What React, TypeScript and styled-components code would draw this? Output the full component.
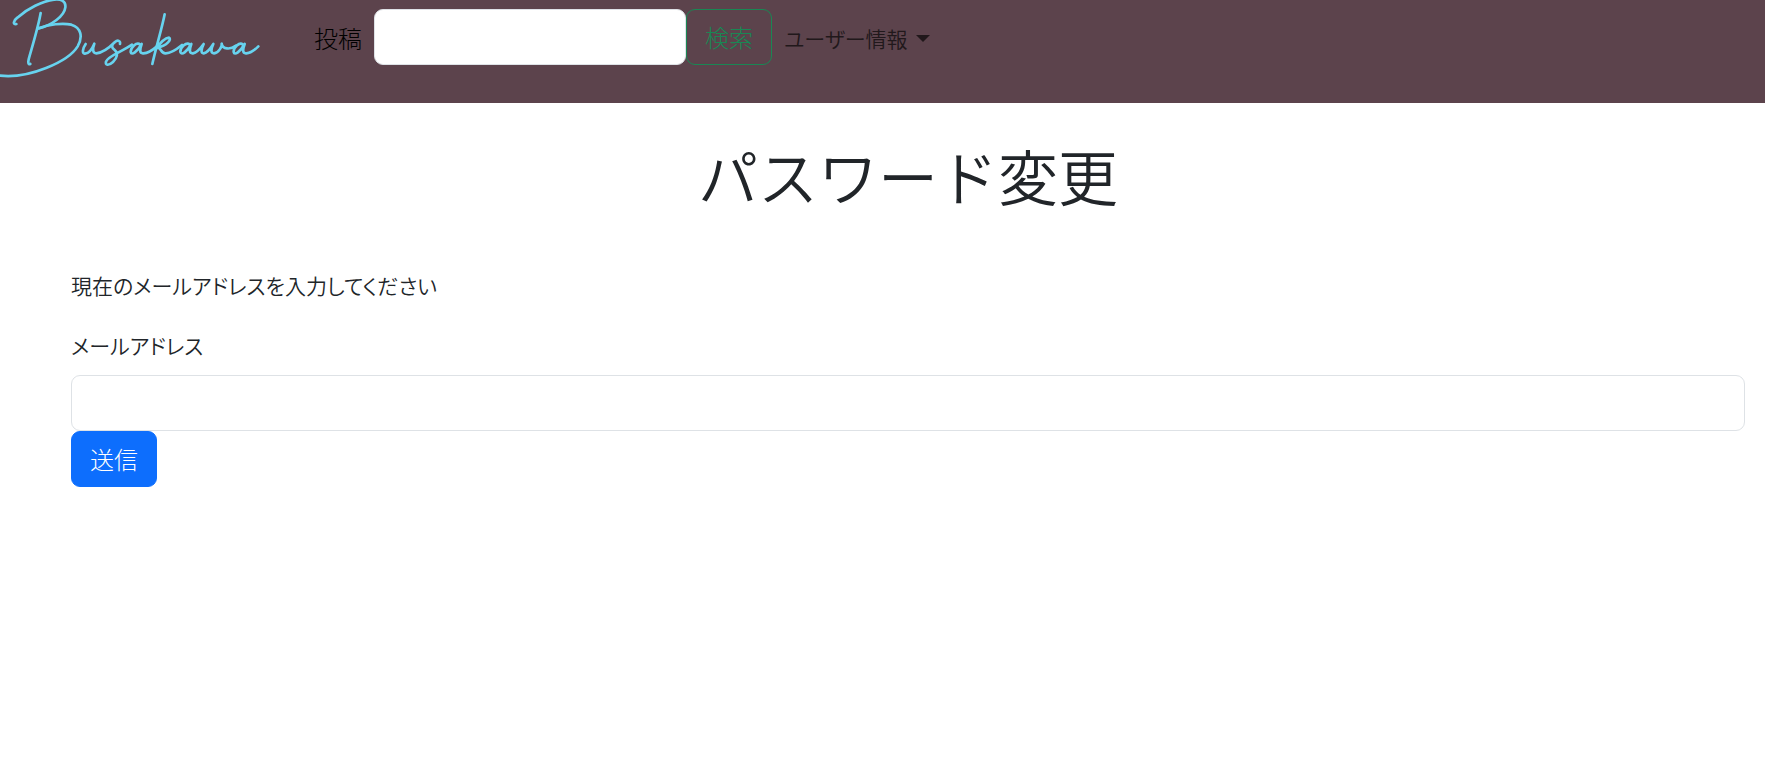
import React from "react";
import styled, { createGlobalStyle } from "styled-components";

const GlobalStyle = createGlobalStyle`
  *, *::before, *::after { box-sizing: border-box; }
  body {
    margin: 0;
    background: #fff;
    color: #212529;
    font-family: "Noto Sans CJK JP", sans-serif;
    font-size: 24px;
    font-weight: 300;
    line-height: 36px;
    font-feature-settings: "palt";
  }
`;

const Header = styled.header`
  display: flex;
  align-items: flex-start;
  min-height: 103px;
  background: #5c434c;
`;

const Brand = styled.a`
  display: block;
  flex: none;
  margin-right: 22px;
`;

const Logo = styled.svg`
  display: block;
  width: 280px;
  height: 80px;
  fill: none;
  stroke: #67d3ef;
  stroke-width: 8;
  stroke-linecap: round;
  stroke-linejoin: round;
`;

const Nav = styled.nav`
  display: flex;
  align-items: center;
  gap: 12px;
  padding: 9px 12px;
`;

const PostLink = styled.a`
  padding-top: 2px;
  color: #000;
  text-decoration: none;
`;

const SearchForm = styled.form`
  display: flex;
`;

const TextInput = styled.input`
  width: 100%;
  height: 56px;
  padding: 9px 18px;
  border: 1px solid #dee2e6;
  border-radius: 9px;
  background: #fff;
  color: inherit;
  font: inherit;
`;

const SearchInput = styled(TextInput)`
  width: 312px;
`;

const Button = styled.button`
  height: 56px;
  padding: 9px 18px;
  border: 1px solid #0d6efd;
  border-radius: 9px;
  background: #0d6efd;
  color: #fff;
  font: inherit;
  line-height: 36px;
  cursor: pointer;
`;

const OutlineButton = styled(Button)`
  border-color: #198754;
  background: transparent;
  color: #198754;
`;

const MenuButton = styled.button`
  display: flex;
  align-items: center;
  gap: 8px;
  padding: 2px 0 0;
  border: 0;
  background: none;
  color: #21181b;
  font: inherit;
  font-size: 21px;
  font-weight: 350;
  font-feature-settings: "palt";
  cursor: pointer;
`;

const Caret = styled.span`
  border-top: 7px solid;
  border-right: 7px solid transparent;
  border-left: 7px solid transparent;
`;

const Main = styled.main`
  padding: 36px 20px 48px 71px;
`;

const Title = styled.h1`
  margin: 0 0 56px;
  font-size: 60px;
  font-weight: 350;
  line-height: 72px;
  text-align: center;
  font-feature-settings: normal;
`;

const Lead = styled.p`
  margin: 0 0 24px;
  font-size: 21px;
  font-weight: 350;
`;

const Label = styled.label`
  display: block;
  margin-bottom: 12px;
  font-size: 21px;
  font-weight: 350;
`;

export default function App() {
  return (
    <>
      <GlobalStyle />
      <Header>
        <Brand href="#" aria-label="Busakawa">
          <Logo viewBox="0 0 840 240" aria-hidden="true">
            <path d="M49 72C38 74 40 62 52 53C82 26 128 3 162 -1C185 -4 198 5 196 22C193 48 155 76 116 85" />
            <path d="M116 85C146 73 188 68 214 74C244 83 249 111 233 139C205 185 86 237 0 227" />
            <path d="M122 39C114 85 94 148 86 178C83 190 86 194 91 192" />
            <path d="M257 132C248 145 245 162 255 161C268 160 278 143 283 131C277 148 278 160 289 160C309 158 334 137 345 126C353 119 362 122 360 132M345 126C333 135 334 142 344 150C355 159 352 174 339 186C326 198 315 196 318 185C323 168 365 156 396 134" />
            <path d="M421 134C409 124 392 144 392 156C394 168 412 155 425 132C418 151 419 161 430 160C444 159 458 150 469 140" />
            <path d="M494 43C486 85 468 142 457 192M466 150C478 132 493 114 507 113C516 117 502 137 472 143C486 144 481 160 496 160C511 161 530 148 546 135" />
            <path d="M570 134C558 124 540 144 541 156C544 168 561 155 574 132C567 151 568 161 579 160C592 158 603 143 611 132C603 149 602 160 611 160C622 158 632 145 640 132C632 149 632 160 642 160C657 159 667 137 665 131C668 148 690 150 708 137" />
            <path d="M729 134C718 124 700 144 701 156C703 168 721 155 734 132C727 151 728 161 739 160C753 159 765 149 775 139" />
          </Logo>
        </Brand>
        <Nav>
          <PostLink href="#">投稿</PostLink>
          <SearchForm onSubmit={(e) => e.preventDefault()}>
            <SearchInput type="search" aria-label="検索" />
            <OutlineButton type="submit">検索</OutlineButton>
          </SearchForm>
          <MenuButton type="button" aria-haspopup="true">
            ユーザー情報
            <Caret />
          </MenuButton>
        </Nav>
      </Header>
      <Main>
        <Title>パスワード変更</Title>
        <Lead>現在のメールアドレスを入力してください</Lead>
        <form onSubmit={(e) => e.preventDefault()}>
          <Label htmlFor="email">メールアドレス</Label>
          <TextInput id="email" type="email" />
          <Button type="submit">送信</Button>
        </form>
      </Main>
    </>
  );
}
